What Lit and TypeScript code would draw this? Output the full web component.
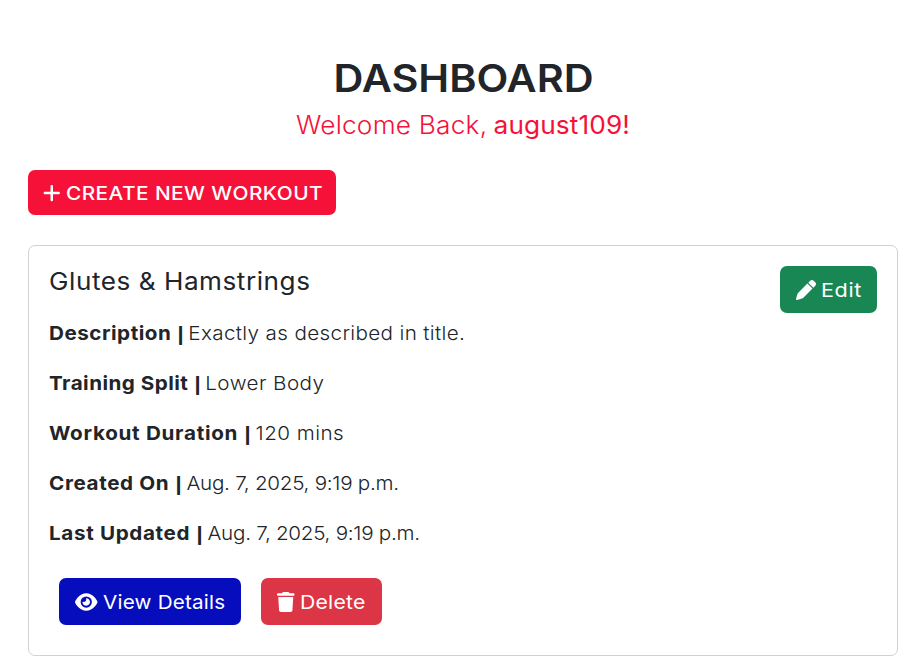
import { LitElement, html, css, svg } from "lit";
import { customElement } from "lit/decorators.js";

const icons = {
  plus: { w: 448, d: "M256 80c0-17.7-14.3-32-32-32s-32 14.3-32 32V224H48c-17.7 0-32 14.3-32 32s14.3 32 32 32H192V432c0 17.7 14.3 32 32 32s32-14.3 32-32V288H400c17.7 0 32-14.3 32-32s-14.3-32-32-32H256V80z" },
  pen: { w: 512, d: "M362.7 19.3L314.3 67.7 444.3 197.7l48.4-48.4c25-25 25-65.5 0-90.5L453.3 19.3c-25-25-65.5-25-90.5 0zm-71 71L58.6 323.5c-10.4 10.4-18 23.3-22.2 37.4L1 481.2C-1.5 489.7 .8 498.8 7 505s15.3 8.5 23.7 6.1l120.3-35.4c14.1-4.2 27-11.8 37.4-22.2L421.7 220.3 291.7 90.3z" },
  eye: { w: 576, d: "M288 32c-80.8 0-145.5 36.8-192.6 80.6C48.6 156 17.3 208 2.5 243.7c-3.3 7.9-3.3 16.7 0 24.6C17.3 304 48.6 356 95.4 399.4C142.5 443.2 207.2 480 288 480s145.5-36.8 192.6-80.6c46.8-43.5 78.1-95.4 93-131.1c3.3-7.9 3.3-16.7 0-24.6c-14.9-35.7-46.2-87.7-93-131.1C433.5 68.8 368.8 32 288 32zM144 256a144 144 0 1 1 288 0 144 144 0 1 1 -288 0zm144-64c0 35.3-28.7 64-64 64c-7.1 0-13.9-1.2-20.3-3.3c-5.5-1.8-11.9 1.6-11.7 7.4c.3 6.9 1.3 13.8 3.2 20.7c13.7 51.2 66.4 81.6 117.6 67.9s81.6-66.4 67.9-117.6c-11.1-41.5-47.8-69.4-88.6-71.1c-5.8-.2-9.2 6.1-7.4 11.7c2.1 6.4 3.3 13.2 3.3 20.3z" },
  trash: { w: 448, d: "M135.2 17.7L128 32H32C14.3 32 0 46.3 0 64S14.3 96 32 96H416c17.7 0 32-14.3 32-32s-14.3-32-32-32H320l-7.2-14.3C307.4 6.8 296.3 0 284.2 0H163.8c-12.1 0-23.2 6.8-28.6 17.7zM416 128H32L53.2 467c1.6 25.3 22.6 45 47.9 45H346.9c25.3 0 46.3-19.7 47.9-45L416 128z" },
};

const icon = (name: keyof typeof icons) => {
  const { w, d } = icons[name];
  return html`<svg class="icon" width=${(w / 512) * 20} height="20" viewBox="0 0 ${w} 512" aria-hidden="true">${svg`<path d=${d}></path>`}</svg>`;
};

interface Field {
  label: string;
  value: string;
  labelTracking: number;
  valueTracking: number;
}

@customElement("app-root")
export class AppRoot extends LitElement {
  static styles = css`
    :host {
      display: block;
      box-sizing: border-box;
      min-height: 662px;
      padding: 54px 25px 6px 28px;
      background: #fff;
      color: #212529;
      font-family: Inter, "Open Sans", sans-serif;
      font-size: 19.3px;
      line-height: 30px;
      white-space: nowrap;
    }
    h1, h2, p, dl, dt, dd { margin: 0; }
    header { text-align: center; }
    h1 {
      padding-left: 1px;
      font-size: 38.5px;
      font-weight: 600;
      line-height: 48px;
      transform: scaleX(1.075);
    }
    .welcome {
      display: flex;
      justify-content: center;
      gap: 6px;
      margin-top: 8px;
      font-size: 25px;
      font-weight: 300;
      letter-spacing: 0.2px;
      color: #f51137;
      transform: scaleX(1.05);
    }
    .user { font-weight: 400; letter-spacing: 0.1px; }
    .btn {
      display: inline-flex;
      align-items: center;
      box-sizing: border-box;
      height: 47px;
      padding: 0 0 0 16px;
      border: 0;
      border-radius: 7px;
      color: #fff;
      font: inherit;
      font-weight: 400;
    }
    .btn span { transform-origin: left; }
    .icon { flex: none; fill: currentColor; }
    .create {
      width: 308px;
      height: 45px;
      margin-top: 30px;
      padding-left: 15px;
      gap: 5px;
      background: #f51137;
      font-weight: 500;
      letter-spacing: 0.39px;
    }
    .create span { transform: scaleX(1.08); }
    .card {
      box-sizing: border-box;
      height: 411px;
      margin-top: 30px;
      padding: 20px;
      border: 1px solid #d0d1d2;
      border-radius: 7px;
    }
    .head {
      display: flex;
      justify-content: space-between;
      align-items: flex-start;
      height: 52px;
    }
    h2 {
      font-size: 24.2px;
      font-weight: 400;
      line-height: 32px;
      letter-spacing: 0.5px;
      transform: scaleX(1.08);
      transform-origin: left;
    }
    .edit { width: 97px; gap: 4.5px; background: #198754; letter-spacing: 0.55px; }
    .edit span { transform: scaleX(1.12); }
    .row {
      display: flex;
      gap: 3.2px;
      margin-bottom: 20px;
      transform: scaleX(1.07);
      transform-origin: left;
    }
    dt { font-weight: 700; }
    dd { font-weight: 300; }
    .bar {
      display: inline-block;
      transform: scaleY(0.82);
      transform-origin: 50% 87%;
    }
    .actions { display: flex; gap: 20px; margin: 20px 0 0 10px; padding-top: 0; }
    .view { width: 182px; gap: 5px; background: #060dbd; letter-spacing: 0.2px; }
    .view span { transform: scaleX(1.07); }
    .delete { width: 121px; gap: 5.5px; background: #dc3545; letter-spacing: 0.2px; }
    .delete span { transform: scaleX(1.1); }
    dl { padding-bottom: 10px; }
    dl + .actions { margin-top: 0; }
  `;

  private fields: Field[] = [
    { label: "Description", value: "Exactly as described in title.", labelTracking: 0.48, valueTracking: 0.33 },
    { label: "Training Split", value: "Lower Body", labelTracking: 0.44, valueTracking: 0.42 },
    { label: "Workout Duration", value: "120 mins", labelTracking: 0.67, valueTracking: 0.43 },
    { label: "Created On", value: "Aug. 7, 2025, 9:19 p.m.", labelTracking: 0.59, valueTracking: -0.26 },
    { label: "Last Updated", value: "Aug. 7, 2025, 9:19 p.m.", labelTracking: 0.61, valueTracking: -0.26 },
  ];

  render() {
    return html`
      <header>
        <h1>DASHBOARD</h1>
        <p class="welcome"><span>Welcome Back,</span><span class="user">august109!</span></p>
      </header>
      <button class="btn create">${icon("plus")}<span>CREATE NEW WORKOUT</span></button>
      <section class="card">
        <div class="head">
          <h2>Glutes &amp; Hamstrings</h2>
          <button class="btn edit">${icon("pen")}<span>Edit</span></button>
        </div>
        <dl>
          ${this.fields.map((f) => html`
            <div class="row">
              <dt style="letter-spacing:${f.labelTracking}px">${f.label} <span class="bar">|</span></dt>
              <dd style="letter-spacing:${f.valueTracking}px">${f.value}</dd>
            </div>`)}
        </dl>
        <div class="actions">
          <button class="btn view">${icon("eye")}<span>View Details</span></button>
          <button class="btn delete">${icon("trash")}<span>Delete</span></button>
        </div>
      </section>
    `;
  }
}
